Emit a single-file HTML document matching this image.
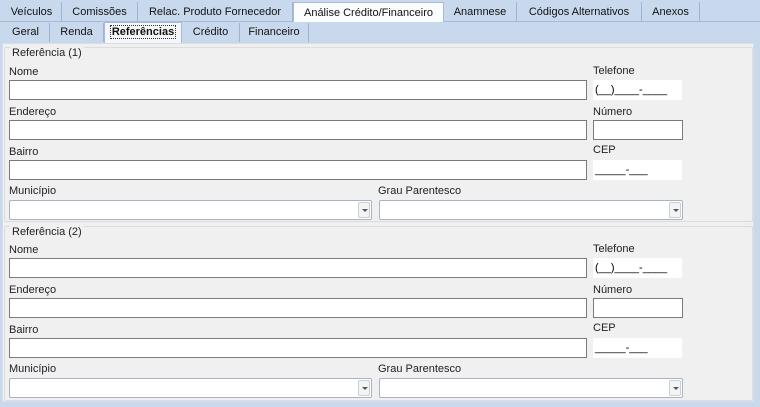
<!DOCTYPE html><html><head><style>
*{margin:0;padding:0;box-sizing:border-box}
body{width:760px;height:407px;background:#c9d9ed;font-family:"Liberation Sans",sans-serif;font-size:11px;color:#000;position:relative;overflow:hidden}
.a{position:absolute}
.tab{position:absolute;top:2px;height:20px;line-height:20px;text-align:center;border-right:1px solid #9fb4cf;color:#111}
.tab2{position:absolute;top:23px;height:19px;line-height:19px;text-align:center;border-right:1px solid #9fb4cf;color:#111}
.panel{position:absolute;left:2px;top:43px;width:752px;height:359px;background:#f0f0f0;border:1px solid #d6dfe9}
.grp{position:absolute;left:4px;width:749px;border:1px solid #dcdcdc;border-radius:2px}
.gt{position:absolute;left:10px;background:#f0f0f0;padding:0 2px;color:#222}
.lb{position:absolute;color:#222}
.in{position:absolute;height:20px;background:#fff;border:1px solid #7a7a7a}
.mk{position:absolute;height:20px;background:#fff;font-size:11px;line-height:20px;padding-left:2px}
.cb{position:absolute;height:20px;background:#fff;border:1px solid #a9b4c2;border-radius:2px}
.cb i{position:absolute;right:1px;top:1px;width:12px;height:16px;border:1px solid #c8cfd8;background:#f4f4f4;border-radius:2px}
.cb i:after{content:"";position:absolute;left:3px;top:6px;border:3px solid transparent;border-top:3px solid #555;}
</style></head><body>
<div class="a" style="left:0;top:21px;width:760px;height:1px;background:#a8bcd6"></div>
<div class="tab" style="left:2px;width:60px">Veículos</div>
<div class="tab" style="left:62px;width:76px">Comissões</div>
<div class="tab" style="left:138px;width:155px">Relac. Produto Fornecedor</div>
<div class="tab" style="left:293px;top:2px;background:#fbfcfe;border:1px solid #a8bcd6;border-bottom:none;height:20px;width:151px">Análise Crédito/Financeiro</div>
<div class="tab" style="left:444px;width:73px">Anamnese</div>
<div class="tab" style="left:517px;width:125px">Códigos Alternativos</div>
<div class="tab" style="left:642px;width:58px">Anexos</div>
<div class="tab2" style="left:2px;width:48px">Geral</div>
<div class="tab2" style="left:50px;width:54px">Renda</div>
<div class="tab2" style="left:104px;width:78px;top:22px;background:#f4f6f9;border:1px solid #a8bcd6;border-bottom:none;height:21px;font-weight:bold;"><span style="outline:1px dotted #333;padding:0 1px">Referências</span></div>
<div class="tab2" style="left:182px;width:58px">Crédito</div>
<div class="tab2" style="left:240px;width:69px">Financeiro</div>
<div class="panel"></div>

<div class="grp" style="top:47px;height:175px"></div>
<div class="gt" style="top:47px">Referência (1)</div>
<div class="grp" style="top:226px;height:175px"></div>
<div class="gt" style="top:226px">Referência (2)</div>

<div id="g1"></div>
<script>
function g(o){return `
<div class="lb" style="left:9px;top:${o+66}px">Nome</div>
<div class="in" style="left:9px;top:${o+80}px;width:578px"></div>
<div class="lb" style="left:593px;top:${o+65}px">Telefone</div>
<div class="mk" style="left:593px;top:${o+80}px;width:89px">(__)____-____</div>
<div class="lb" style="left:9px;top:${o+106}px">Endereço</div>
<div class="in" style="left:9px;top:${o+120}px;width:578px"></div>
<div class="lb" style="left:593px;top:${o+106}px">Número</div>
<div class="in" style="left:593px;top:${o+120}px;width:90px"></div>
<div class="lb" style="left:9px;top:${o+146}px">Bairro</div>
<div class="in" style="left:9px;top:${o+160}px;width:578px"></div>
<div class="lb" style="left:593px;top:${o+144}px">CEP</div>
<div class="mk" style="left:593px;top:${o+160}px;width:89px">_____-___</div>
<div class="lb" style="left:9px;top:${o+185}px">Município</div>
<div class="cb" style="left:9px;top:${o+200}px;width:363px"><i></i></div>
<div class="lb" style="left:378px;top:${o+185}px">Grau Parentesco</div>
<div class="cb" style="left:379px;top:${o+200}px;width:304px"><i></i></div>`}
document.getElementById('g1').innerHTML=g(0)+g(178);
</script>
</body></html>
